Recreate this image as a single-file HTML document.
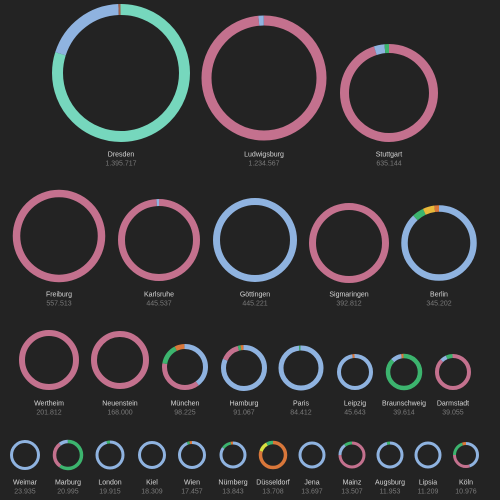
<!DOCTYPE html>
<html><head><meta charset="utf-8"><style>
html,body{margin:0;padding:0;background:#232323;}
svg{display:block}
text{font-family:"Liberation Sans",sans-serif;text-anchor:middle;font-size:7px}
.n{fill:#d6d6d6}.v{fill:#7a7a7a}
</style></head><body>
<svg width="500" height="500" viewBox="0 0 500 500" xmlns="http://www.w3.org/2000/svg">
<rect width="500" height="500" fill="#232323"/>
<g id="c"></g>
</svg>
<script>
const C={t:"#76d7bd",p:"#c4718e",b:"#8fb3e0",g:"#3cb46e",o:"#d9773a",y:"#e8b83a",br:"#a0604a",ye:"#d8e040"};
const D=[
["Dresden","1.395.717",121,73,63.5,11,[["t",0,80],["b",80,99.5],["br",99.5,100]],154],
["Ludwigsburg","1.234.567",264,78,57.5,10,[["p",0,98.6],["b",98.6,100]],154],
["Stuttgart","635.144",389,93,44.5,9,[["p",0,95],["b",95,98.5],["g",98.5,100]],154],
["Freiburg","557.513",59,236,42.5,7.5,[["p",0,100]],294],
["Karlsruhe","445.537",159,240,37.5,7,[["p",0,99],["b",99,100]],294],
["Göttingen","445.221",255,240,38.5,7,[["b",0,100]],294],
["Sigmaringen","392.812",349,243,36.5,7,[["p",0,100]],294],
["Berlin","345.202",439,243,34.5,6.5,[["b",0,88],["g",88,93],["y",93,98],["o",98,100]],294],
["Wertheim","201.812",49,360,27,6,[["p",0,100]],403],
["Neuenstein","168.000",120,360,26,6,[["p",0,100]],403],
["München","98.225",185,367,20.5,5,[["b",0,40],["p",40,78],["g",78,93],["o",93,100]],403],
["Hamburg","91.067",244,368,20.5,5,[["b",0,82],["p",82,96],["g",96,98],["o",98,100]],403],
["Paris","84.412",301,368,20,5,[["b",0,99],["g",99,100]],403],
["Leipzig","45.643",355,372,16,4,[["b",0,98],["o",98,100]],403],
["Braunschweig","39.614",404,372,16,4.5,[["g",0,88],["b",88,98],["o",98,100]],403],
["Darmstadt","39.055",453,372,16,4,[["p",0,88],["b",88,94],["g",94,100]],403],
["Weimar","23.935",25,455,13.5,3,[["b",0,100]],482],
["Marburg","20.995",68,455,13.5,3.5,[["g",0,60],["p",60,90],["b",90,100]],482],
["London","19.915",110,455,13,3,[["b",0,96],["g",96,100]],482],
["Kiel","18.309",152,455,12.5,3,[["b",0,100]],482],
["Wien","17.457",192,455,12.5,3,[["b",0,94],["g",94,97],["o",97,100]],482],
["Nürnberg","13.843",233,455,12,3,[["b",0,85],["g",85,97],["o",97,100]],482],
["Düsseldorf","13.708",273,455,12.5,3.5,[["o",0,80],["ye",80,92],["g",92,100]],482],
["Jena","13.697",312,455,12,3,[["b",0,100]],482],
["Mainz","13.507",352,455,12,3,[["p",0,75],["b",75,90],["g",90,100]],482],
["Augsburg","11.953",390,455,12,3,[["b",0,96],["g",96,100]],482],
["Lipsia","11.209",428,455,12,3,[["b",0,100]],482],
["Köln","10.976",466,455,11.5,3,[["b",0,45],["p",45,75],["g",75,95],["o",95,100]],482]
];
let s="";
for(const [n,v,x,y,r,w,segs,ly] of D){
 for(const [c,a,b] of segs){
  s+=`<circle cx="${x}" cy="${y}" r="${r}" fill="none" stroke="${C[c]}" stroke-width="${w}" pathLength="100" stroke-dasharray="${b-a} ${100-(b-a)+0.001}" stroke-dashoffset="${-a}" transform="rotate(-90 ${x} ${y})"/>`;
 }
 s+=`<text class="n" x="${x}" y="${ly+2.5}">${n}</text><text class="v" x="${x}" y="${ly+11.5}">${v}</text>`;
}
document.getElementById("c").innerHTML=s;
</script>
</body></html>
